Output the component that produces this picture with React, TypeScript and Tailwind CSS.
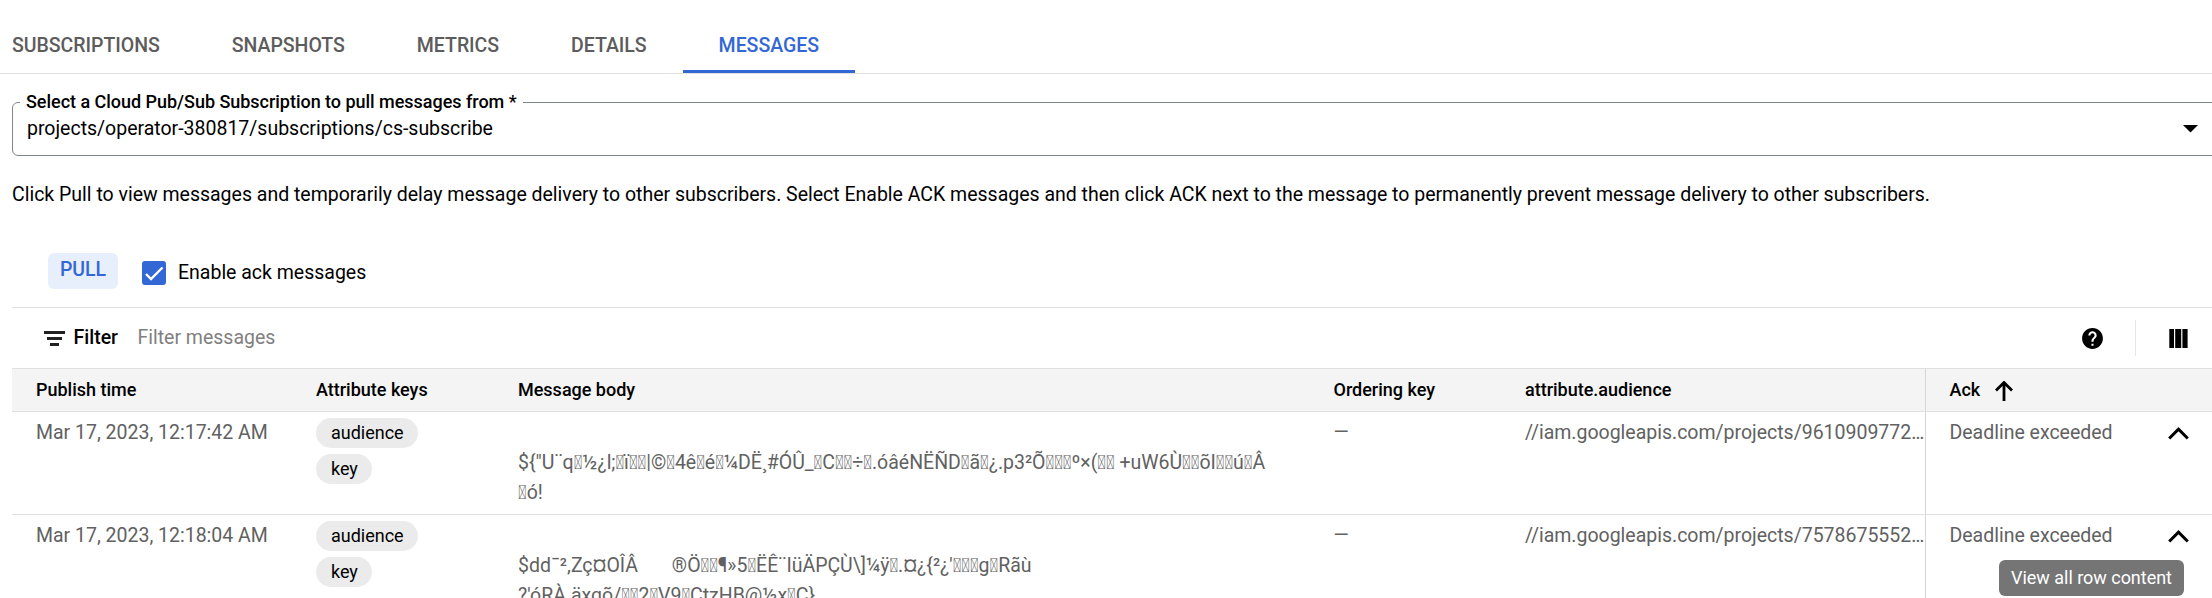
import { Fragment } from "react";
import type { ReactNode } from "react";

const tabs = ["SUBSCRIPTIONS", "SNAPSHOTS", "METRICS", "DETAILS", "MESSAGES"];

// Private-use code point: drawn as the font's missing-glyph box, as undecodable bytes are.
const X = "\uE123";

const messages = [
  {
    time: "Mar 17, 2023, 12:17:42 AM",
    body: [
      `\${"U¨q${X}½¿l;${X}ï${X}${X}|©${X}4ê${X}é${X}¼DË¸#ÓÛ_${X}C${X}${X}÷${X}.óâéNËÑD${X}ã${X}¿.p3²Õ${X}${X}${X}º×(${X}${X} +uW6Ù${X}${X}õI${X}${X}ú${X}Â`,
      `${X}ó!`,
    ],
    audience: "//iam.googleapis.com/projects/9610909772…",
  },
  {
    time: "Mar 17, 2023, 12:18:04 AM",
    body: [
      `$dd¯²‚Zç¤OÎÂ\u2003\u2002\u2009®Ö${X}${X}¶»5${X}ËÊ¨IüÄPÇÙ\\]¼ÿ${X}.¤¿{²¿'${X}${X}${X}g${X}Rãù`,
      `?'óRÀ.äxgõ/${X}${X}2${X}V9${X}CtzHB@½x${X}C}`,
    ],
    audience: "//iam.googleapis.com/projects/7578675552…",
  },
];

const columns = "grid grid-cols-[280px_202px_816px_191px_401px_287px] ml-3 pl-6";

function Chip({ children }: { children: ReactNode }) {
  return (
    <span className="h-[30px] rounded-full bg-[#ebebeb] pl-[15px] pr-[14px] text-[18px] leading-[30px] text-black">{children}</span>
  );
}

export default function App() {
  return (
    <div className="relative flex h-[598px] w-full flex-col overflow-hidden bg-white font-['Roboto',sans-serif] text-[19.5px] leading-[30px] tracking-[-0.008px] text-black">
      <nav className="flex h-[74px] shrink-0 items-end border-b border-[#e0e0e0] font-medium tracking-[-0.03px] text-[#5c5c5c]">
        {tabs.map((t) =>
          t === "MESSAGES" ? (
            <div key={t} className="h-[42px] border-b-[3px] border-[#3367d6] px-9 text-[#3367d6]">{t}</div>
          ) : (
            <div key={t} className="h-[42px] px-9 first:pl-3">{t}</div>
          ),
        )}
      </nav>

      <fieldset className="ml-3 mt-[17px] -mr-4 flex h-[65px] shrink-0 flex-col rounded-[6px] border border-[#80868b] pl-[7px] pr-[29px]">
        <legend className="h-[22px] px-[6px] text-[18px] font-medium leading-[21px] tracking-[-0.03px]">
          Select a Cloud Pub/Sub Subscription to pull messages from *
        </legend>
        <div className="flex justify-between pl-[7px] pt-px">
          <span>projects/operator-380817/subscriptions/cs-subscribe</span>
          <svg className="mt-[11px] h-[8px] w-[15px]" viewBox="0 0 15 8"><path d="M0 0h15L7.5 7.5z" /></svg>
        </div>
      </fieldset>

      <p className="ml-3 mt-[24px] whitespace-nowrap">
        Click Pull to view messages and temporarily delay message delivery to other subscribers. Select Enable ACK messages and then click ACK next to the message to permanently prevent message delivery to other subscribers.
      </p>

      <div className="ml-3 mt-[43px] flex h-[55px] shrink-0 items-start border-b border-[#e0e0e0] pl-9">
        <button className="h-9 w-[70px] rounded-[6px] bg-[#e8effc] pb-0.5 font-medium leading-[34px] text-[#3367d6]">PULL</button>
        <label className="ml-6 mt-[5px] flex items-start">
          <svg className="mr-3 mt-[3px] size-6 rounded-[3px] bg-[#3367d6]" viewBox="0 0 24 24">
            <path d="M4 13l5 5L20.500 6.500" fill="none" stroke="#fff" strokeWidth="2.400" />
          </svg>
          Enable ack messages
        </label>
      </div>

      <div className="ml-3 flex h-[61px] shrink-0 items-center border-b border-[#e0e0e0] pl-8">
        <svg className="mr-[8.500px] mt-px h-[15px] w-[21px]" viewBox="0 0 21 15">
          <path d="M0 0h21v3H0zM3 6h15v3H3zM6 12h9v3H6z" fill="#212121" />
        </svg>
        <span className="font-medium">Filter</span>
        <span className="ml-[19.500px] text-[#808080]">Filter messages</span>
        <svg className="ml-auto mr-[30px] size-[25px]" viewBox="0 0 24 24">
          <path d="M12 2C6.480 2 2 6.480 2 12s4.480 10 10 10 10-4.480 10-10S17.520 2 12 2zm1 17h-2v-2h2v2zm2.070-7.750l-.9.920C13.450 12.900 13 13.500 13 15h-2v-.5c0-1.100.450-2.100 1.170-2.830l1.240-1.260c.370-.360.590-.860.590-1.410 0-1.100-.900-2-2-2s-2 .900-2 2H8c0-2.210 1.790-4 4-4s4 1.790 4 4c0 .880-.360 1.680-.930 2.250z" />
        </svg>
        <div className="h-9 w-px bg-[#e6e6e6]" />
        <svg className="ml-[33px] mr-6 h-[19px] w-[19px]" viewBox="0 0 19 19">
          <path d="M0.300 0h4.700v19H0.300zM6.200 0h6v19H6.200zM13.400 0h5.200v19h-5.200z" />
        </svg>
      </div>

      <div className={`${columns} h-[43px] shrink-0 border-b border-[#e0e0e0] bg-[#f4f4f4] text-[18px] font-medium leading-[42px]`}>
        <span>Publish time</span>
        <span>Attribute keys</span>
        <span>Message body</span>
        <span className="-ml-[0.5px]">Ordering key</span>
        <span>attribute.audience</span>
        <div className="-ml-px flex border-l border-[#d6d6d6] pl-[23.500px]">
          Ack
          <svg className="ml-[15px] mt-[12px] h-5 w-[18px]" viewBox="0 0 18 20">
            <path d="M9 20V2M1 9.500l8-8 8 8" fill="none" stroke="#000" strokeWidth="2.800" />
          </svg>
        </div>
      </div>

      {messages.map((m) => (
        <div key={m.time} className={`${columns} h-[103px] shrink-0 border-b border-[#e0e0e0] text-[#616161]`}>
          <span className="pt-1.5">{m.time}</span>
          <div className="flex flex-col items-start gap-1.5 pt-1.5">
            <Chip>audience</Chip>
            <Chip>key</Chip>
          </div>
          <div className="whitespace-pre pt-9">
            {m.body.map((line) => (
              <Fragment key={line}>{line}{"\n"}</Fragment>
            ))}
          </div>
          <span className="-ml-[0.5px] pt-1.5">—</span>
          <span className="whitespace-nowrap pt-1.5">{m.audience}</span>
          <div className="-ml-px flex border-l border-[#d6d6d6] pl-[23.500px] pt-1.5">
            Deadline exceeded
            <svg className="ml-auto mr-6 mt-[9px] h-[13px] w-[21px]" viewBox="0 0 21 13">
              <path d="M1.200 11.500l9.300-9.300 9.300 9.300" fill="none" stroke="#000" strokeWidth="3" />
            </svg>
          </div>
        </div>
      ))}

      <div className="absolute left-[1999px] top-[560px] h-9 w-[185px] rounded-[6px] bg-[#757575] text-center text-[18px] leading-[35px] tracking-[-0.03px] text-white">
        View all row content
      </div>
    </div>
  );
}
